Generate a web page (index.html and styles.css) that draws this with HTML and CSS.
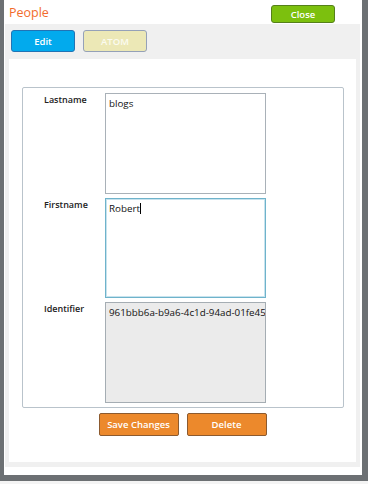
FILE: index.html
```html
<!DOCTYPE html>
<html>
<head>
<meta charset="utf-8">
<link rel="stylesheet" href="styles.css">
</head>
<body>
<div class="screen">
  <div class="dialog">
    <div class="titlebar">
      <span class="title">People</span>
      <button class="btn btn-close">Close</button>
    </div>
    <div class="panel">
      <div class="toolbar">
        <button class="btn btn-edit">Edit</button>
        <button class="btn btn-atom">ATOM</button>
      </div>
      <div class="content">
        <div class="fieldset">
          <div class="row">
            <div class="label">Lastname</div>
            <div class="field">blogs</div>
          </div>
          <div class="row">
            <div class="label">Firstname</div>
            <div class="field focused">Robert<span class="caret"></span></div>
          </div>
          <div class="row">
            <div class="label">Identifier</div>
            <div class="field readonly">961bbb6a-b9a6-4c1d-94ad-01fe45</div>
          </div>
        </div>
        <div class="actions">
          <button class="btn btn-orange">Save Changes</button>
          <button class="btn btn-orange">Delete</button>
        </div>
      </div>
    </div>
  </div>
</div>
</body>
</html>
```
FILE: styles.css
```css
html, body {
  margin: 0;
  padding: 0;
  background: #ffffff;
}
body {
  font-family: "Open Sans", "DejaVu Sans", sans-serif;
  color: #222;
}
.screen {
  width: 368px;
  height: 484px;
  background: #f4f4f4;
  overflow: hidden;
}
.dialog {
  box-sizing: border-box;
  width: 368px;
  height: 481px;
  background: #ffffff;
  border-left: 4px solid #6c7073;
  border-right: 6px solid #6c7073;
  border-bottom: 6px solid #6c7073;
  display: flex;
  flex-direction: column;
}
.titlebar {
  height: 24px;
  display: flex;
  align-items: flex-start;
  justify-content: space-between;
  padding: 0 27px 0 5px;
}
.title {
  color: #f26b2c;
  font-size: 12.5px;
  line-height: 14px;
  margin-top: 6px;
}
.btn {
  font-family: "Open Sans", "DejaVu Sans", sans-serif;
  font-weight: 600;
  font-size: 9.5px;
  color: #ffffff;
  padding: 0;
  box-sizing: border-box;
  border-radius: 3px;
  cursor: pointer;
}
.btn-close {
  margin-top: 5px;
  width: 64px;
  height: 18px;
  background: #7cc00e;
  border: 1px solid #55801a;
}
.panel {
  margin: 0 2px 0 1px;
  height: 438px;
  background: #f0f0f0;
  display: flex;
  flex-direction: column;
  padding: 0 4px 5px 4px;
}
.toolbar {
  height: 35px;
  display: flex;
  gap: 8px;
  padding: 6px 0 0 2px;
  box-sizing: border-box;
}
.btn-edit {
  width: 64px;
  height: 22px;
  background: #02aaed;
  border: 1px solid #2273b4;
}
.btn-atom {
  width: 64px;
  height: 22px;
  background: #ece8b6;
  border: 1px solid #95a1b8;
  color: #fbfbf0;
}
.content {
  flex: 1;
  background: #ffffff;
  padding: 28px 12px 0 13px;
  display: flex;
  flex-direction: column;
}
.fieldset {
  border: 1px solid #b9c3cb;
  border-radius: 2px;
  height: 321px;
  box-sizing: border-box;
  padding: 5px 0 0 21px;
  display: flex;
  flex-direction: column;
  gap: 4px;
}
.row {
  display: grid;
  grid-template-columns: 61px 161px;
}
.label {
  font-size: 9px;
  font-weight: 600;
  line-height: 12px;
  padding-top: 1px;
  color: #222;
}
.field {
  box-sizing: border-box;
  height: 101px;
  border: 1px solid #a9b1b8;
  background: #ffffff;
  font-size: 9.8px;
  line-height: 13px;
  padding: 3px 0 0 3px;
  white-space: nowrap;
  overflow: hidden;
  color: #111;
}
.field.focused {
  height: 100px;
  border-color: #6fb3cb;
  box-shadow: inset 0 0 0 1px #c7e3ee;
}
.field.readonly {
  background: #ebebeb;
  border-color: #a5adb3;
}
.caret {
  display: inline-block;
  width: 1px;
  height: 11px;
  background: #000;
  vertical-align: -2px;
}
.actions {
  display: flex;
  justify-content: center;
  gap: 8px;
  padding-top: 5px;
  padding-right: 1px;
}
.btn-orange {
  width: 80px;
  height: 23px;
  background: #ec892c;
  border: 1px solid #8c5a2f;
  border-radius: 2px;
}
```
